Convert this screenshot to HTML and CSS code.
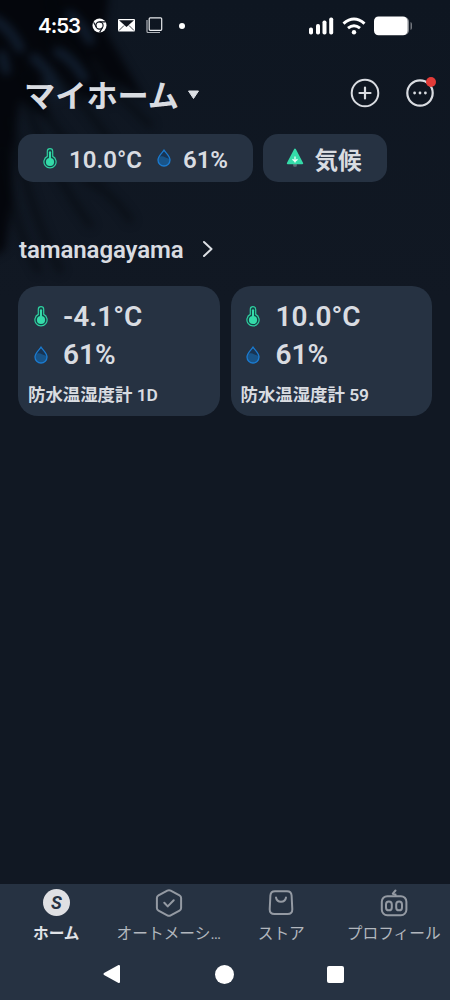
FILE: index.html
```html
<!DOCTYPE html>
<html lang="ja">
<head>
<meta charset="utf-8">
<title>マイホーム</title>
<link rel="stylesheet" href="styles.css">
</head>
<body>
<svg class="defs" width="0" height="0" aria-hidden="true">
  <symbol id="thermo" viewBox="0 0 14 21">
    <path d="M4.300 3.400a2.700 2.700 0 0 1 5.400 0v5a6.100 6.100 0 1 1-5.400 0z" fill="#163f45" stroke="#2fcf9f" stroke-width="1.200"/>
    <circle cx="7" cy="14" r="4.100" fill="#35dba9"/>
    <path d="M7 4.300v8" stroke="#35dba9" stroke-width="2.100" stroke-linecap="round"/>
  </symbol>
  <symbol id="drop" viewBox="0 0 14 18">
    <path d="M7 1.200C5.400 3.700 1 7.200 1 11a6 6 0 0 0 12 0C13 7.200 8.600 3.700 7 1.200z" fill="#183453"/>
    <path d="M1.300 9.500C3 6.500 6 7 8 8.300q2.500 1.500 4.800 1A6 6 0 1 1 1.300 9.500z" fill="#195488"/>
    <path d="M7 1.200C5.400 3.700 1 7.200 1 11a6 6 0 0 0 12 0C13 7.200 8.600 3.700 7 1.200z" fill="none" stroke="#1b7bd0" stroke-width="1.300"/>
  </symbol>
</svg>
<div class="app">
  <svg class="leaves" viewBox="0 0 450 500" aria-hidden="true">
    <g class="shade">
      <path class="mass" d="M-20-20h130l-5 50 20 35 20 35-40-25-15-20 20 50-30-10-30-30-10 20 10 35-30-20-8 50 0 50-7 50-20 10z"/>
      <path class="blade" d="M50 0Q60 50 115 85M45 35Q85 60 150 125M30 55Q80 90 125 165M25 75Q55 140 105 178M25 100Q50 170 90 225M12 120Q25 200 60 270M5 150Q10 220 38 270M85 180Q110 190 130 220"/>
      <path class="tip" d="M-5 20Q10 28 20 48M34 58Q50 70 58 95M58 52Q72 58 84 78M70 15Q82 25 90 40M2 55l4 15"/>
    </g>
  </svg>

  <header class="status">
    <div class="status-left">
      <span class="clock">4:53</span>
      <svg class="chrome" width="15" height="15" viewBox="0 0 15 15"><circle cx="7.500" cy="7.500" r="7" fill="#fff"/><circle cx="7.500" cy="7.500" r="3.600" fill="none" stroke="#10151e" stroke-width="1.200"/><path d="M7.500 3.900h6M4.400 9.200L1.600 4.200M10.600 9.200l-3 5.200" stroke="#10151e" stroke-width="1.200"/></svg>
      <svg class="mail" width="17" height="13" viewBox="0 0 17 13"><rect width="17" height="12.500" rx="1" fill="#fff"/><path d="M1 1.300L8.500 8 16 1.300z" fill="#10151e"/><path d="M1 11.500l5-5M16 11.500l-5-5" stroke="#10151e" stroke-width=".8"/></svg>
      <svg class="copy" width="17" height="17" viewBox="0 0 17 17" fill="none" stroke="#e8eaed" stroke-width="1.200"><rect x="3.200" y=".8" width="12.500" height="12.500" rx="1"/><path d="M1 3v11.500q0 1 1 1h12" stroke="#aeb2b8"/></svg>
      <i class="dot"></i>
    </div>
    <div class="status-right">
      <svg width="25" height="18" viewBox="0 0 25 18" fill="#fff"><rect y="10.500" width="4" height="7" rx="1.800"/><rect x="7" y="7" width="4" height="10.500" rx="1.800"/><rect x="13.500" y="3.500" width="4" height="14" rx="1.800"/><rect x="20.200" y=".5" width="4" height="17" rx="1.800"/></svg>
      <svg width="24" height="18" viewBox="0 0 24 18" fill="none" stroke="#fff" stroke-width="3"><path d="M1.500 6.700Q12-2.600 22.500 6.700M6 11.100q6-4.800 12 0"/><circle cx="12" cy="15.300" r="2.200" fill="#fff" stroke="none"/></svg>
      <svg width="39" height="20" viewBox="0 0 39 20"><path d="M31 1q4 1 4 5v8q0 4-4 5z" fill="#85888e"/><rect x="0" y=".5" width="33.500" height="18.800" rx="4.500" fill="#fff"/><path d="M36.500 6q1.500.5 1.500 2v4q0 1.500-1.500 2z" fill="#73777e"/></svg>
    </div>
  </header>

  <div class="topbar">
    <h1 class="home-name">マイホーム</h1>
    <svg class="caret" width="13" height="10" viewBox="0 0 13 10"><path d="M1.500 1h10L6.500 8.500z" fill="#dcdfe4" stroke="#dcdfe4" stroke-linejoin="round"/></svg>
    <div class="actions">
      <svg width="30" height="30" viewBox="0 0 30 30" fill="none" stroke="#d9dce1" stroke-width="2"><circle cx="15" cy="15" r="13.300"/><path d="M15 9.500v11M9.500 15h11" stroke-width="2.200" stroke-linecap="round"/></svg>
      <div class="more">
        <svg width="30" height="30" viewBox="0 0 30 30"><circle cx="15" cy="15" r="12.700" fill="none" stroke="#d9dce1" stroke-width="2.200"/><g fill="#d9dce1"><circle cx="9.600" cy="15" r="1.400"/><circle cx="15" cy="15" r="1.400"/><circle cx="20.400" cy="15" r="1.400"/></g></svg>
        <i class="badge"></i>
      </div>
    </div>
  </div>

  <div class="chips">
    <div class="chip readings">
      <svg class="thermo"><use href="#thermo"/></svg><span class="chip-temp">10.0°C</span>
      <svg class="drop"><use href="#drop"/></svg><span>61%</span>
    </div>
    <div class="chip climate">
      <svg width="18" height="20" viewBox="0 0 18 20"><path d="M7.200 15h3.600v3.200q-1.800 1.300-3.600 0z" fill="#5c6b75"/><path d="M9 1.500L16.300 15.300H1.700z" fill="#35dba9" stroke="#35dba9" stroke-width="1.800" stroke-linejoin="round"/><path d="M9 8.500v6M6.500 11.300L9 13.500l2.500-2.200" fill="none" stroke="#effff9" stroke-width="1.300"/></svg>
      <span>気候</span>
    </div>
  </div>

  <div class="room">
    <h2>tamanagayama</h2>
    <svg width="12" height="18" viewBox="0 0 12 18"><path d="M2 2l7.500 7L2 16" fill="none" stroke="#dcdfe4" stroke-width="2" stroke-linecap="round" stroke-linejoin="round"/></svg>
  </div>

  <main class="cards">
    <section class="card">
      <div class="reading"><svg class="thermo"><use href="#thermo"/></svg><span>-4.1°C</span></div>
      <div class="reading"><svg class="drop"><use href="#drop"/></svg><span>61%</span></div>
      <p>防水温湿度計 1D</p>
    </section>
    <section class="card">
      <div class="reading"><svg class="thermo"><use href="#thermo"/></svg><span>10.0°C</span></div>
      <div class="reading"><svg class="drop"><use href="#drop"/></svg><span>61%</span></div>
      <p>防水温湿度計 59</p>
    </section>
  </main>

  <footer class="bottom">
    <nav class="tabs">
      <div class="tab active"><span class="s-logo">S</span><span>ホーム</span></div>
      <div class="tab"><svg width="28" height="28" viewBox="0 0 28 28"><path d="M12.300 1.700q1.700-.9 3.400 0l8.800 4.700q1.600.9 1.600 2.700v9.800q0 1.800-1.600 2.700l-8.800 4.700q-1.700.9-3.400 0l-8.800-4.700q-1.600-.9-1.600-2.700V9.100q0-1.800 1.600-2.700zM9.300 13.800l3.400 3.600 6-6.200"/></svg><span>オートメーシ<span class="ellipsis">…</span></span></div>
      <div class="tab"><svg width="28" height="28" viewBox="0 0 28 28"><path d="M8 2.200h12q4.300 0 4.600 4.300l.7 13.700q.1 4.800-4.700 4.800H7.400q-4.800 0-4.700-4.800L3.400 6.500q.3-4.300 4.600-4.300zM9 8.500c1 5.600 9 5.600 10 0"/></svg><span>ストア</span></div>
      <div class="tab"><svg width="28" height="28" viewBox="0 0 28 28"><rect x="1.800" y="7.200" width="24.600" height="19" rx="5.500"/><rect x="6" y="12.500" width="5.800" height="8.800" rx="2.900"/><rect x="16.200" y="12.500" width="5.800" height="8.800" rx="2.900"/><path d="M15.500 1.500l-2.700 3.200 2.700.8v1.500"/></svg><span>プロフィール</span></div>
    </nav>
    <div class="sysnav">
      <svg width="20" height="20" viewBox="0 0 20 20"><path d="M2.500 10L17 2v16z" fill="#fff" stroke="#fff" stroke-width="2" stroke-linejoin="round"/></svg>
      <i class="sys-home"></i>
      <i class="sys-recent"></i>
    </div>
  </footer>
</div>
</body>
</html>
```

FILE: styles.css
```css
* { box-sizing: border-box; }
body { margin: 0; background: #111823; }
h1, h2, p { margin: 0; }
svg { display: block; flex: none; }
.defs { position: absolute; }

.app {
  position: relative;
  isolation: isolate;
  display: flex;
  flex-direction: column;
  width: 450px;
  height: 1000px;
  overflow: hidden;
  background: linear-gradient(#0e1621, #111823 300px);
  color: #d9dce1;
  font-family: Roboto, "Noto Sans CJK JP", sans-serif;
  font-weight: 600;
}

.leaves { position: absolute; z-index: -1; top: 0; left: 0; width: 450px; height: 500px; }
.shade { filter: blur(4.500px); }
.mass { fill: #020408; opacity: .85; }
.blade { fill: none; stroke: #04070c; stroke-width: 7; opacity: .5; stroke-linecap: round; }
.tip { fill: none; stroke: #111d2d; stroke-width: 10; stroke-linecap: round; }

.status { display: flex; justify-content: space-between; height: 51px; padding: 0 37px 0 38px; }
.status-left, .status-right { display: flex; align-items: center; }
.clock { width: 54px; color: #fff; font: 600 20.500px Inter, sans-serif; letter-spacing: -1px; }
.mail { margin-left: 11px; }
.copy { margin-left: 11px; }
.dot { width: 6px; height: 6px; margin-left: 16px; border-radius: 50%; background: #fff; }
.status-right { gap: 8px; }

.topbar { display: flex; align-items: center; height: 83px; padding-left: 24px; }
.home-name { font: 700 31.200px/44px "Noto Sans CJK JP", sans-serif; margin-top: 2px; }
.caret { margin: 5px 0 0 8px; }
.actions { display: flex; gap: 25px; margin: 1px 0 0 auto; padding-right: 15px; }
.more { position: relative; }
.badge { position: absolute; top: -1px; right: -1px; width: 10px; height: 10px; border-radius: 50%; background: #e23b38; }

.chips { display: flex; gap: 10px; padding-left: 18px; }
.chip {
  display: flex;
  align-items: center;
  height: 48px;
  border-radius: 15px;
  background: #263242;
  font-size: 24px;
}
.readings { width: 235px; padding-left: 25px; }
.readings span { padding-top: 3px; }
.thermo { width: 14px; height: 21px; }
.drop { width: 14px; height: 18px; }
.readings .thermo { margin-right: 12px; }
.readings .drop { margin: 0 12px 0 15px; }
.climate { width: 124px; padding-left: 23px; gap: 10.500px; }
.climate span { padding-top: 1px; font: 700 23.600px "Noto Sans CJK JP", sans-serif; }

.room { display: flex; align-items: center; gap: 18px; height: 103px; padding: 31px 0 0 19px; }
.room h2 { padding-top: 2px; font-size: 24px; font-weight: 600; letter-spacing: -.1px; }

.cards { display: grid; grid-template-columns: 201.500px 201.500px; gap: 11px; margin-top: .5px; padding-left: 18px; }
.card { height: 130px; padding: 12px 10px; border-radius: 20px; background: #263242; }
.reading { display: flex; align-items: center; gap: 15.500px; height: 38px; padding-left: 5.500px; font-size: 28px; }
.card p { margin-top: 9px; font-size: 17.400px; line-height: 25px; }

.bottom { height: 116px; margin-top: auto; background: #263242; }
.tabs { display: grid; grid-template-columns: repeat(4, 1fr); height: 64px; padding-top: 5px; }
.tab {
  display: flex;
  flex-direction: column;
  align-items: center;
  gap: 4px;
  color: #b2b7be;
  font: 400 15.700px/24px "Noto Sans CJK JP", sans-serif;
  white-space: nowrap;
}
.ellipsis { font-family: Roboto, sans-serif; }
.tab svg { fill: none; stroke: #949aa3; stroke-width: 2; stroke-linecap: round; stroke-linejoin: round; }
.active { color: #e0e3e8; font-weight: 700; }
.s-logo {
  width: 27px;
  height: 27px;
  margin-bottom: 1px;
  border-radius: 50%;
  background: #dfe0e3;
  color: #263242;
  font: italic 700 18px/27px Roboto, sans-serif;
  text-align: center;
}
.sysnav { display: flex; align-items: center; justify-content: center; gap: 93px; height: 52px; padding-right: 4px; }
.sys-home { width: 19px; height: 19px; border-radius: 50%; background: #fff; }
.sys-recent { width: 17px; height: 17px; border-radius: 2px; background: #fff; }
```
